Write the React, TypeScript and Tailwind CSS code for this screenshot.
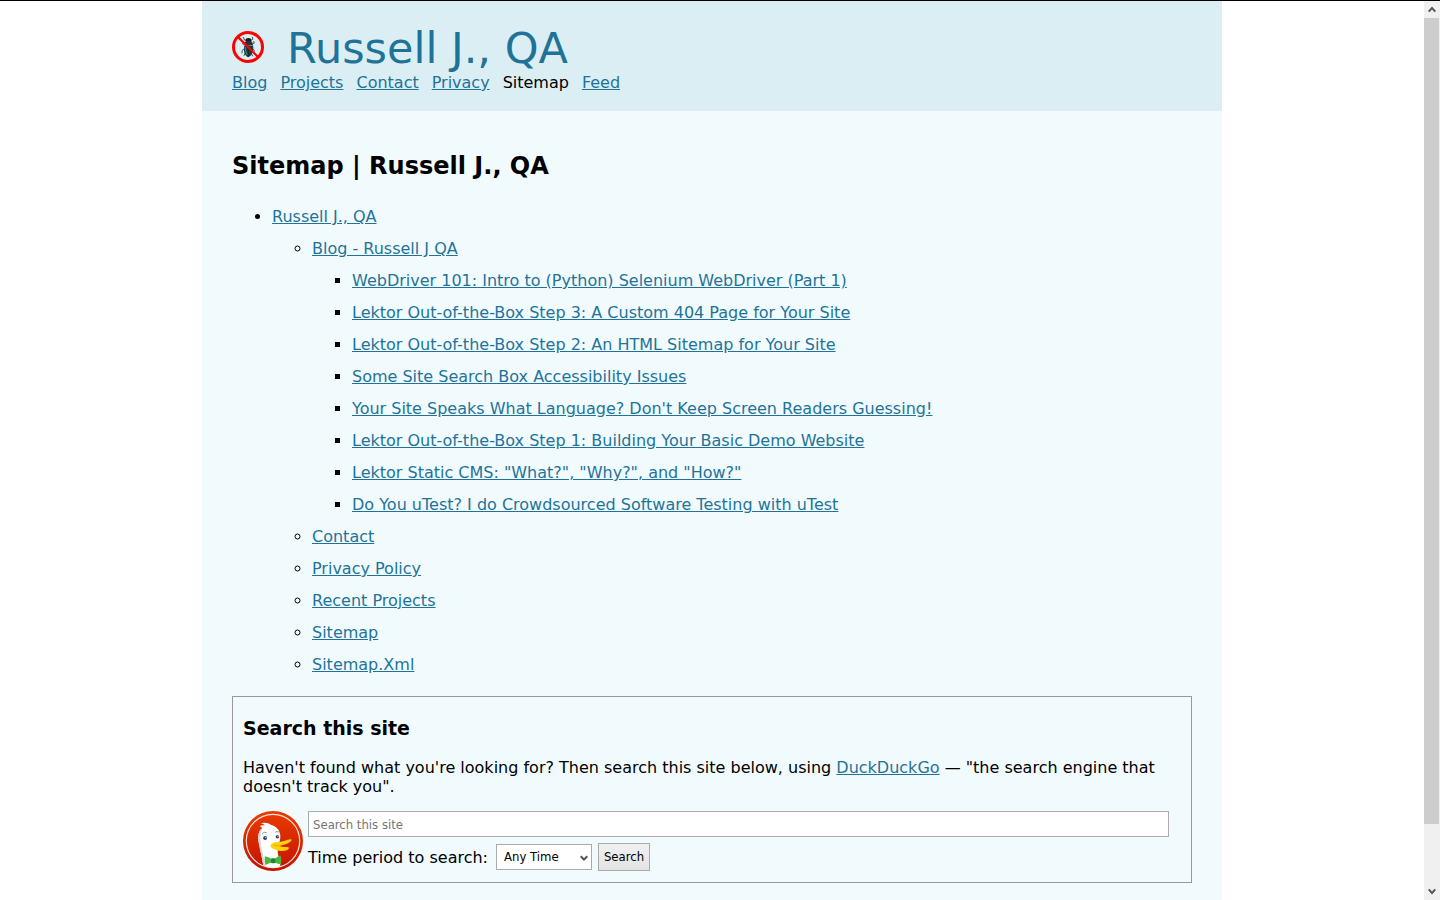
import React from "react";

const linkClass = "text-[#1f7398] underline";

function BugLogo() {
  return (
    <svg viewBox="0 0 32 32" className="mb-0.5 h-8 w-8 shrink-0" role="img" aria-label="No bugs">
      <g stroke="#2a3338" strokeWidth="0.8" fill="none" strokeLinecap="round">
        <path d="M14.4 9.5 L12 8.6 L11.6 6.4" />
        <path d="M18.4 9.5 L20.8 8.4 L20.4 6.2" />
        <path d="M13 14 L10.4 12.6" />
        <path d="M20 13.5 L22.2 12.2 L21.8 10.4" />
        <path d="M12 18 L10.2 19.4 L10 22" />
        <path d="M20.5 18 L22.2 19 L22 21.2" />
        <path d="M13 22.4 L12 24.6" />
        <path d="M19.4 22.5 L20.6 25" />
      </g>
      <ellipse cx="16.4" cy="9.2" rx="2.9" ry="2.2" fill="#161b20" />
      <path d="M12.8 11 Q16.4 9 20.3 10.8 L20.9 14 Q16.5 15.4 12.5 14 Z" fill="#24343b" />
      <path d="M12.2 14.4 Q16.4 15.8 21 14.2 Q22 19.5 19.9 23 Q17.8 26.4 16 26.2 Q12.6 24.4 11.9 19.4 Z" fill="#103f43" />
      <path d="M13.3 16 Q13 20 15.2 23.8" stroke="#4a8184" strokeWidth="1.2" fill="none" />
      <path d="M16.6 15.2 L16.6 25.6" stroke="#0b2022" strokeWidth="0.7" />
      <circle cx="16" cy="16" r="14.5" fill="none" stroke="#ff0000" strokeWidth="3" />
      <path d="M5.6 5.6 L26.4 26.4" stroke="#ff0000" strokeWidth="2.2" />
    </svg>
  );
}

function DuckLogo() {
  return (
    <svg viewBox="0 0 60 60" className="h-15 w-15 shrink-0" role="img" aria-label="DuckDuckGo">
      <defs>
        <linearGradient id="disc" x1="0" y1="0" x2="0" y2="1">
          <stop offset="0" stopColor="#ea3c00" />
          <stop offset="1" stopColor="#c41200" />
        </linearGradient>
        <clipPath id="inner">
          <circle cx="30" cy="30" r="26.5" />
        </clipPath>
      </defs>
      <circle cx="30" cy="30" r="30" fill="url(#disc)" />
      <circle cx="30" cy="30" r="26.7" fill="none" stroke="#fbe6df" strokeWidth="1.2" />
      <g clipPath="url(#inner)">
        <path
          d="M20.5 57 C19.8 49 17.5 41 16.2 34 C14.6 26.5 14.8 20.4 19.2 17.3 C18.6 15.9 17.5 15.4 16.3 15.5 C17.8 14.2 20 13.9 21.8 14.3 C20.8 12.9 19.2 12.3 17.4 12.4 C20.8 10.9 25.4 11.7 28.2 13.9 C33.4 15.2 36.8 19 37.3 24.2 C37.7 28.3 36.2 31.4 35.5 34.8 C34.8 38.7 34.2 41.5 35.4 45 C36.4 48.3 37.3 52 37.5 57 Z"
          fill="#ffffff"
        />
        <path d="M16.2 34 C17.5 41 19.8 49 20.5 57 L22.5 57 C21.8 48 18.8 41 18 33 C17.4 28 17 23 19.2 17.3 C14.8 20.4 14.6 26.5 16.2 34 Z" fill="#d5d7d8" />
      </g>
      <path d="M19 22.8 Q21 20.3 23.6 21.6" stroke="#7792ae" strokeWidth="0.9" fill="none" />
      <path d="M32 21.3 Q34 19.8 36 21.1" stroke="#7792ae" strokeWidth="0.9" fill="none" />
      <circle cx="22.1" cy="27" r="2" fill="#29466f" />
      <circle cx="34.4" cy="25.8" r="1.8" fill="#29466f" />
      <circle cx="22.8" cy="26.3" r="0.6" fill="#ffffff" />
      <circle cx="35" cy="25.2" r="0.6" fill="#ffffff" />
      <path
        d="M27.6 34.5 C28.4 31.6 32 30.9 36 30.9 C40.5 30.9 43.6 28.5 47.4 28.2 C49.2 28.1 48.4 30 46.9 31.1 C43.9 33.2 39.5 34.4 36.4 34.9 C39.4 36.4 42.7 35.6 45.3 36.2 C46.8 36.7 45.5 38.4 43.5 39.2 C40.4 40.5 35.9 40 32.2 38.4 C29.3 37.2 27 36.6 27.6 34.5 Z"
        fill="#fdd20a"
      />
      <path d="M31 34.4 C34 34.6 36 34.9 38 34.5" stroke="#e5a100" strokeWidth="0.7" fill="none" />
      <path d="M21.8 45.3 Q25.5 45.8 28.8 48 L29 51.5 Q25.5 52.2 22.4 54 Q21.2 49.4 21.8 45.3 Z" fill="#51b53d" />
      <path d="M31.6 48 Q34.6 45.4 37.8 44.6 Q38.8 49 38 53.6 Q35 53 31.8 51.6 Z" fill="#51b53d" />
      <rect x="28" y="47.2" width="4.4" height="5" rx="1.2" fill="#168b32" />
    </svg>
  );
}

const navItems = ["Blog", "Projects", "Contact", "Privacy", "Sitemap", "Feed"];

const posts = [
  "WebDriver 101: Intro to (Python) Selenium WebDriver (Part 1)",
  "Lektor Out-of-the-Box Step 3: A Custom 404 Page for Your Site",
  "Lektor Out-of-the-Box Step 2: An HTML Sitemap for Your Site",
  "Some Site Search Box Accessibility Issues",
  "Your Site Speaks What Language? Don't Keep Screen Readers Guessing!",
  "Lektor Out-of-the-Box Step 1: Building Your Basic Demo Website",
  'Lektor Static CMS: "What?", "Why?", and "How?"',
  "Do You uTest? I do Crowdsourced Software Testing with uTest",
];

const pages = ["Contact", "Privacy Policy", "Recent Projects", "Sitemap", "Sitemap.Xml"];

function TextLink({ children }: { children: React.ReactNode }) {
  return (
    <a href="#" className={linkClass}>
      {children}
    </a>
  );
}

function Header() {
  return (
    <header className="bg-[#dbeef4] px-[30px] pt-[21px] pb-5">
      <div className="flex items-center gap-[23px]">
        <BugLogo />
        <div className="text-[43px] leading-[52px] text-[#1f7398]">Russell J., QA</div>
      </div>
      <nav className="flex flex-wrap gap-[13px] leading-[17px]">
        {navItems.map((item) =>
          item === "Sitemap" ? (
            <span key={item} aria-current="page">
              {item}
            </span>
          ) : (
            <TextLink key={item}>{item}</TextLink>
          ),
        )}
      </nav>
    </header>
  );
}

function SiteTree() {
  return (
    <ul className="mt-5 list-disc pl-10 leading-8">
      <li>
        <TextLink>Russell J., QA</TextLink>
        <ul className="list-[circle] pl-10">
          <li>
            <TextLink>Blog - Russell J QA</TextLink>
            <ul className="list-[square] pl-10">
              {posts.map((post) => (
                <li key={post}>
                  <TextLink>{post}</TextLink>
                </li>
              ))}
            </ul>
          </li>
          {pages.map((page) => (
            <li key={page}>
              <TextLink>{page}</TextLink>
            </li>
          ))}
        </ul>
      </li>
    </ul>
  );
}

function SearchPanel() {
  return (
    <section className="mt-[15px] border border-[#999999] px-[10px] pb-[11px]">
      <h3 className="mt-5 text-[19px] leading-[23px] font-bold">Search this site</h3>
      <p className="mt-[18px] leading-[19px]">
        Haven't found what you're looking for? Then search this site below, using{" "}
        <TextLink>DuckDuckGo</TextLink> — "the search engine that doesn't track you".
      </p>
      <form className="mt-[15px] flex gap-[5px]" onSubmit={(e) => e.preventDefault()}>
        <DuckLogo />
        <div className="flex grow flex-col gap-[6px] pr-3">
          <input
            type="search"
            aria-label="Search this site"
            placeholder="Search this site"
            className="h-[26px] w-full border border-[#ababab] bg-white px-1 font-['DejaVu_Sans_Condensed','DejaVu_Sans',sans-serif] text-[13px] placeholder:text-[#757575]"
          />
          <div className="flex items-center gap-[6px]">
            <label htmlFor="period" className="pr-0.5 leading-[19px]">
              Time period to search:
            </label>
            <div className="relative">
              <select
                id="period"
                className="h-[26px] w-24 appearance-none border border-[#ababab] bg-white pl-[7px] font-['DejaVu_Sans_Condensed','DejaVu_Sans',sans-serif] text-[13px] text-black"
              >
                <option>Any Time</option>
                <option>Past Day</option>
                <option>Past Week</option>
                <option>Past Month</option>
              </select>
              <svg viewBox="0 0 8 7" className="pointer-events-none absolute top-[11px] right-1 h-[7px] w-2" aria-hidden="true">
                <path d="M0.8 1.2 L4 4.6 L7.2 1.2" stroke="#505050" strokeWidth="2" fill="none" />
              </svg>
            </div>
            <button
              type="submit"
              className="h-7 w-[52px] border border-[#ababab] bg-linear-to-b from-[#f1f1f1] to-[#e3e3e3] font-['DejaVu_Sans_Condensed','DejaVu_Sans',sans-serif] text-[13px] text-black"
            >
              Search
            </button>
          </div>
        </div>
      </form>
    </section>
  );
}

function ScrollTrack() {
  return (
    <div className="flex w-4 shrink-0 flex-col bg-[#f0f0f0] pr-px" aria-hidden="true">
      <div className="flex h-[17px] shrink-0 items-center justify-center">
        <svg viewBox="0 0 8 7" className="h-[7px] w-2">
          <path d="M0.7 5.6 L4 2 L7.3 5.6" stroke="#555555" strokeWidth="2" fill="none" />
        </svg>
      </div>
      <div className="flex grow flex-col">
        <div className="grow-[932] bg-[#cdcdcd]" />
        <div className="grow-[68]" />
      </div>
      <div className="flex h-[17px] shrink-0 items-center justify-center">
        <svg viewBox="0 0 8 7" className="h-[7px] w-2">
          <path d="M0.7 1.4 L4 5 L7.3 1.4" stroke="#555555" strokeWidth="2" fill="none" />
        </svg>
      </div>
    </div>
  );
}

export default function App() {
  return (
    <div className="flex h-screen border-t border-black bg-white font-['DejaVu_Sans',sans-serif] text-base text-black">
      <div className="grow overflow-y-auto [scrollbar-width:none]">
        <div className="mx-auto min-h-full max-w-[1020px] bg-[#f1fbfe]">
          <Header />
          <main className="px-[30px] pt-[41px] pb-5">
            <h1 className="text-2xl leading-[29px] font-bold">Sitemap | Russell J., QA</h1>
            <SiteTree />
            <SearchPanel />
          </main>
        </div>
      </div>
      <ScrollTrack />
    </div>
  );
}
